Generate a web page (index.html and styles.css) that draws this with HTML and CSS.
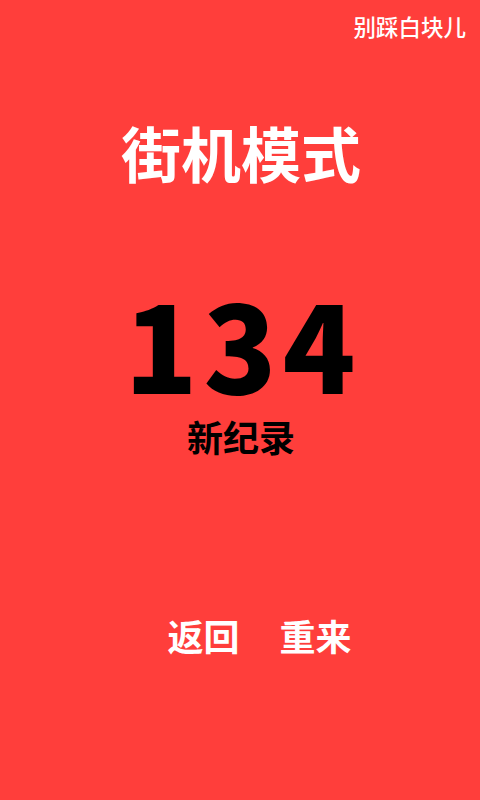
FILE: index.html
```html
<!DOCTYPE html>
<html lang="zh">
<head>
<meta charset="utf-8">
<link rel="stylesheet" href="styles.css">
</head>
<body>
<div class="screen">
  <div class="topbar"><span class="brand">别踩白块儿</span></div>
  <h1 class="mode">街机模式</h1>
  <div class="score">134</div>
  <div class="record">新纪录</div>
  <div class="actions">
    <span class="btn">返回</span>
    <span class="btn">重来</span>
  </div>
</div>
</body>
</html>
```
FILE: styles.css
```css
html, body {
  margin: 0;
  padding: 0;
  background: #ff3e3b;
}
.screen {
  width: 480px;
  height: 800px;
  display: flex;
  flex-direction: column;
  align-items: center;
  font-family: "Noto Sans CJK SC", "Noto Sans", sans-serif;
  color: #fff;
}
.topbar {
  align-self: stretch;
  display: flex;
  justify-content: flex-end;
  padding: 11px 14px 0 0;
  height: 30px;
}
.brand {
  font-size: 22.5px;
  line-height: 30px;
  font-weight: 500;
}
.mode {
  margin: 71px 0 0 0;
  font-size: 60px;
  line-height: 80px;
  font-weight: 700;
  padding-left: 2px;
}
.score {
  margin-top: 80px;
  font-size: 120px;
  line-height: 140px;
  font-weight: 900;
  letter-spacing: 6px;
  padding-left: 6px;
  color: #000;
}
.record {
  font-size: 36px;
  line-height: 44px;
  font-weight: 700;
  color: #000;
  margin-top: 2px;
  padding-left: 2px;
}
.actions {
  margin-top: 155px;
  display: flex;
  gap: 40px;
  padding-left: 39px;
}
.btn {
  font-size: 36px;
  line-height: 44px;
  font-weight: 700;
}
```
